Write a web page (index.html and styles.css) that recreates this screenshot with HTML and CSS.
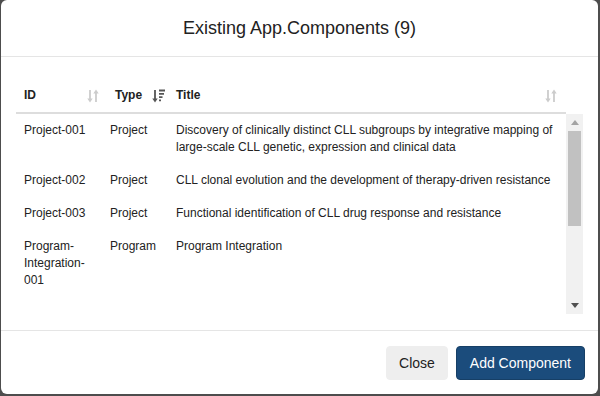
FILE: index.html
```html
<!DOCTYPE html>
<html lang="en">
<head>
    <meta charset="UTF-8">
    <meta name="viewport" content="width=device-width, initial-scale=1.0">
    <title>Existing App.Components</title>
    <link rel="stylesheet" href="styles.css">
</head>
<body>
    <div class="modal">
        <div class="modal-header">
            <h4 class="modal-title">Existing App.Components (9)</h4>
        </div>
        <div class="modal-body">
            <div class="thead">
                <div class="th col-id">ID
                    <svg class="sort" width="12" height="14" viewBox="0 0 12 14"><path d="M3 1v10M9 3v10" stroke="#ccc" stroke-width="1.8"/><path d="M0.3 9.5h5.4L3 13.5zM6.3 4.5h5.4L9 0.5z" fill="#ccc"/></svg>
                </div>
                <div class="th col-type">Type
                    <svg class="sort" width="14" height="14" viewBox="0 0 14 14"><path d="M3 1v10" stroke="#555" stroke-width="1.8"/><path d="M0.3 9.5h5.4L3 13.5z" fill="#555"/><path d="M7 1.5h6M7 4.8h5M7 8.1h3.5M7 11.4h2" stroke="#555" stroke-width="1.8"/></svg>
                </div>
                <div class="th col-title">Title
                    <svg class="sort" width="12" height="14" viewBox="0 0 12 14"><path d="M3 1v10M9 3v10" stroke="#ccc" stroke-width="1.8"/><path d="M0.3 9.5h5.4L3 13.5zM6.3 4.5h5.4L9 0.5z" fill="#ccc"/></svg>
                </div>
            </div>
            <div class="scroll-area">
                <div class="tbody">
                    <div class="tr"><div class="td">Project-001</div><div class="td">Project</div><div class="td">Discovery of clinically distinct CLL subgroups by integrative mapping of large-scale CLL genetic, expression and clinical data</div></div>
                    <div class="tr"><div class="td">Project-002</div><div class="td">Project</div><div class="td">CLL clonal evolution and the development of therapy-driven resistance</div></div>
                    <div class="tr"><div class="td">Project-003</div><div class="td">Project</div><div class="td">Functional identification of CLL drug response and resistance</div></div>
                    <div class="tr"><div class="td">Program-Integration-001</div><div class="td">Program</div><div class="td">Program Integration</div></div>
                </div>
                <div class="scrollbar">
                    <div class="sb-btn"><svg width="8" height="5" viewBox="0 0 8 5"><path d="M0 5L4 0L8 5z" fill="#a3a3a3"/></svg></div>
                    <div class="sb-track"><div class="sb-thumb"></div></div>
                    <div class="sb-btn"><svg width="8" height="5" viewBox="0 0 8 5"><path d="M0 0L8 0L4 5z" fill="#505050"/></svg></div>
                </div>
            </div>
        </div>
        <div class="modal-footer">
            <button class="btn btn-default">Close</button>
            <button class="btn btn-primary">Add Component</button>
        </div>
    </div>
</body>
</html>
```

FILE: styles.css
```css
* {
    margin: 0;
    padding: 0;
    box-sizing: border-box;
}
body {
    background: #4d4d4d;
    font-family: "Liberation Sans", Arial, sans-serif;
    color: #333;
    height: 396px;
    overflow: hidden;
}
.modal {
    display: flex;
    flex-direction: column;
    height: 394px;
    margin: 0 2px 0 1px;
    background: #fff;
    border-radius: 6px;
}
.modal-header {
    padding: 15px;
    border-bottom: 1px solid #e5e5e5;
    text-align: center;
}
.modal-title {
    font-size: 18px;
    font-weight: normal;
    line-height: 26px;
    color: #222;
}
.modal-body {
    flex: 1;
    padding: 22px 15px 0 15px;
    font-size: 12px;
    line-height: 17px;
}
.thead {
    display: grid;
    grid-template-columns: 91px 61px 1fr;
    margin-right: 17px;
    border-bottom: 2px solid #ddd;
}
.th {
    display: flex;
    align-items: center;
    justify-content: space-between;
    padding: 8px;
    font-weight: bold;
    color: #222;
}
.col-type {
    padding-right: 2px;
}
.col-title {
    padding-right: 9px;
}
.sort {
    flex: none;
}
.scroll-area {
    display: flex;
    height: 200px;
}
.tbody {
    flex: 1;
    overflow: hidden;
}
.tr {
    display: grid;
    grid-template-columns: 86px 66px 1fr;
}
.td {
    padding: 8px;
    color: #222;
}
.scrollbar {
    display: flex;
    flex-direction: column;
    width: 17px;
    background: #f1f1f1;
}
.sb-btn {
    display: flex;
    align-items: center;
    justify-content: center;
    height: 17px;
}
.sb-track {
    flex: 1;
    padding: 0 2px;
}
.sb-thumb {
    height: 95px;
    background: #c1c1c1;
}
.modal-footer {
    display: flex;
    justify-content: flex-end;
    gap: 8px;
    padding: 15px 13px 14px;
    border-top: 1px solid #e5e5e5;
}
.btn {
    font-family: "Liberation Sans", Arial, sans-serif;
    font-size: 14px;
    line-height: 20px;
    padding: 6px 12px;
    border: 1px solid transparent;
    border-radius: 4px;
    cursor: pointer;
}
.btn-default {
    background: #eee;
    border-color: #eee;
    color: #222;
}
.btn-primary {
    background: #1b4c7c;
    border-color: #163f66;
    color: #fff;
    padding: 6px 13px;
}
```
